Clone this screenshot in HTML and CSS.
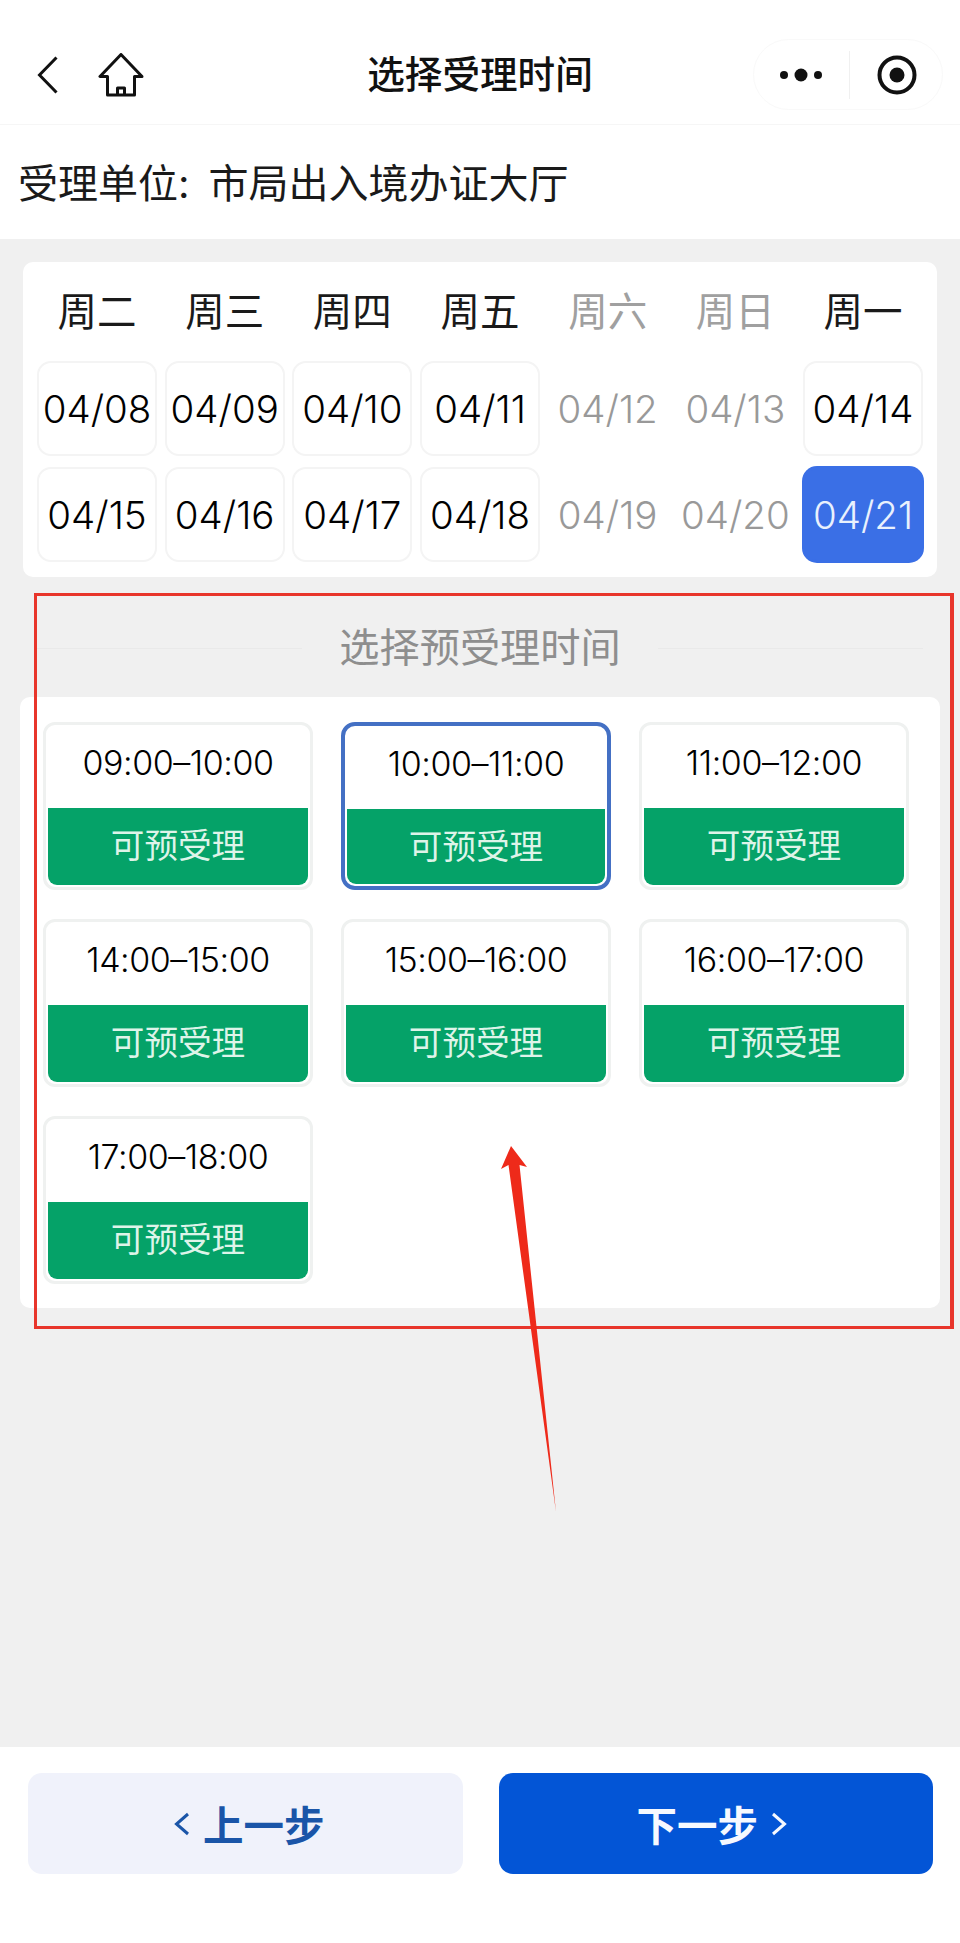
FILE: index.html
```html
<!DOCTYPE html>
<html lang="zh-CN">
<head>
<meta charset="utf-8">
<title>选择受理时间</title>
<link rel="stylesheet" href="styles.css">
</head>
<body>
<div class="page">
  <header class="nav">
    <div class="nav-left">
      <svg class="icon-back" viewBox="0 0 20 38"><path d="M19 1.500 2 19l17 17.500"/></svg>
      <svg class="icon-home" viewBox="0 0 46 44"><path d="M23 1.500 2 23.500h7.500V42h27V23.500H44Z"/><path d="M19.500 42v-7h7v7"/></svg>
    </div>
    <h1 class="nav-title">选择受理时间</h1>
    <div class="nav-right">
      <div class="capsule">
        <svg class="icon-dots" viewBox="0 0 42 16"><circle cx="4" cy="8" r="4"/><circle cx="21" cy="8" r="6.500"/><circle cx="38" cy="8" r="4"/></svg>
        <span class="capsule-line"></span>
        <svg class="icon-target" viewBox="0 0 40 40"><circle class="ring" cx="20" cy="20" r="17.500"/><circle cx="20" cy="20" r="7.500"/></svg>
      </div>
    </div>
  </header>
  <div class="unit">受理单位: <span class="unit-name">市局出入境办证大厅</span></div>
  <main class="main">
    <section class="calendar">
      <div class="week">周二</div><div class="week">周三</div><div class="week">周四</div><div class="week">周五</div><div class="week off">周六</div><div class="week off">周日</div><div class="week">周一</div>
      <div class="date">04/08</div><div class="date">04/09</div><div class="date">04/10</div><div class="date">04/11</div><div class="date off">04/12</div><div class="date off">04/13</div><div class="date">04/14</div>
      <div class="date">04/15</div><div class="date">04/16</div><div class="date">04/17</div><div class="date">04/18</div><div class="date off">04/19</div><div class="date off">04/20</div><div class="date active">04/21</div>
    </section>
    <div class="section-head">
      <span class="section-line"></span>
      <h2 class="section-title">选择预受理时间</h2>
      <span class="section-line"></span>
    </div>
    <section class="slots">
      <div class="slot"><div class="slot-time">09:00–10:00</div><div class="slot-state">可预受理</div></div>
      <div class="slot selected"><div class="slot-time">10:00–11:00</div><div class="slot-state">可预受理</div></div>
      <div class="slot"><div class="slot-time">11:00–12:00</div><div class="slot-state">可预受理</div></div>
      <div class="slot"><div class="slot-time">14:00–15:00</div><div class="slot-state">可预受理</div></div>
      <div class="slot"><div class="slot-time">15:00–16:00</div><div class="slot-state">可预受理</div></div>
      <div class="slot"><div class="slot-time">16:00–17:00</div><div class="slot-state">可预受理</div></div>
      <div class="slot"><div class="slot-time">17:00–18:00</div><div class="slot-state">可预受理</div></div>
    </section>
  </main>
  <footer class="footer">
    <div class="btn btn-prev">
      <svg class="btn-chev" viewBox="0 0 16 24"><path d="M14 2 2.500 12 14 22"/></svg>
      <span>上一步</span>
    </div>
    <div class="btn btn-next">
      <span>下一步</span>
      <svg class="btn-chev" viewBox="0 0 16 24"><path d="M2 2l11.500 10L2 22"/></svg>
    </div>
  </footer>
  <div class="mark-box"></div>
  <svg class="mark-arrow" viewBox="0 0 70 380"><path d="M21 6 37 27 29.500 25 66 372 18.500 25 11 29Z"/></svg>
</div>
</body>
</html>
```
FILE: styles.css
```css
* { box-sizing: border-box; }
html, body { margin: 0; padding: 0; }
body {
  background: #fff;
  color: #111;
  font-family: Inter, "Noto Sans CJK SC", sans-serif;
}
.page {
  position: relative;
  display: flex;
  flex-direction: column;
  width: 960px;
  height: 1943px;
  overflow: hidden;
}
.nav {
  display: grid;
  grid-template-columns: 1fr auto 1fr;
  align-items: center;
  height: 125px;
  padding: 39px 17px 14px;
  border-bottom: 1px solid #f6f6f6;
}
.nav-left {
  display: flex;
  align-items: center;
  gap: 40px;
  padding-left: 20px;
}
.icon-back { width: 21px; height: 38px; }
.icon-back path { fill: none; stroke: #111; stroke-width: 3; }
.icon-home { width: 46px; height: 44px; }
.icon-home path { fill: none; stroke: #111; stroke-width: 3; stroke-linejoin: round; }
.nav-title {
  margin: 0;
  font-size: 37.600px;
  line-height: 44px;
  font-weight: 500;
  color: #111;
}
.nav-right { display: flex; justify-content: flex-end; }
.capsule {
  display: flex;
  align-items: center;
  width: 190px;
  height: 71px;
  padding-left: 26px;
  border: 1px solid #f9f9f9;
  border-radius: 36px;
}
.icon-dots { width: 42px; height: 16px; fill: #111; }
.capsule-line {
  width: 1px;
  height: 48px;
  margin: 0 27px;
  background: #f0f0f0;
}
.icon-target { width: 40px; height: 40px; fill: #111; }
.icon-target .ring { fill: none; stroke: #111; stroke-width: 4; }
.unit {
  display: flex;
  align-items: center;
  height: 114px;
  padding: 4px 0 0 18px;
  font-size: 40px;
  line-height: 50px;
  color: #1a1a1a;
}
.unit-name { margin-left: 19px; }
.main {
  flex: 1;
  padding: 23px 20px 0;
  background: #f0f0f0;
}
.calendar {
  display: grid;
  grid-template-columns: repeat(7, 1fr);
  column-gap: 7.670px;
  row-gap: 11px;
  margin: 0 3px;
  padding: 25px 14px 15px;
  background: #fff;
  border-radius: 10px;
}
.week {
  height: 50px;
  margin-bottom: 13px;
  font-size: 39.500px;
  line-height: 50px;
  text-align: center;
  color: #1a1a1a;
}
.week.off { color: #a0a0a0; }
.date {
  display: flex;
  align-items: center;
  justify-content: center;
  height: 95px;
  font-size: 38.500px;
  font-weight: 300;
  color: #000;
  border: 2px solid #f4f4f4;
  border-radius: 14px;
  white-space: nowrap;
}
.date.off { color: #999; border-color: transparent; }
.date.active {
  color: #e9f1fd;
  background: #3a6fe6;
  border-color: #3a6fe6;
  box-shadow: 0 0 0 1px #3a6fe6;
}
.section-head {
  display: flex;
  align-items: center;
  gap: 37px;
  height: 120px;
  padding: 22px 17px 0;
}
.section-line { flex: 1; height: 1px; background: #e9e9e9; }
.section-title {
  margin: 0;
  font-size: 40.200px;
  line-height: 50px;
  font-weight: 400;
  color: #8e8e8e;
}
.slots {
  display: grid;
  grid-template-columns: repeat(3, 270px);
  column-gap: 28px;
  row-gap: 29px;
  height: 611px;
  align-content: start;
  padding: 25px 23px;
  background: #fff;
  border-radius: 10px;
}
.slot {
  display: flex;
  flex-direction: column;
  height: 168px;
  padding: 2px;
  background: #fff;
  border: 3px solid #eff1f0;
  border-radius: 12px;
}
.slot.selected { padding: 2px; border: 4px solid #4470c4; border-radius: 14px; }
.slot-time {
  height: 81px;
  padding-bottom: 10px;
  font-size: 34px;
  font-weight: 300;
  line-height: 71px;
  letter-spacing: -0.450px;
  text-align: center;
  color: #000;
  white-space: nowrap;
}
.slot-state {
  flex: 1;
  font-size: 33.600px;
  line-height: 75px;
  text-align: center;
  color: #def4e9;
  background: #05a268;
  border-radius: 0 0 9px 9px;
}
.footer {
  display: flex;
  align-items: flex-start;
  gap: 36px;
  height: 196px;
  padding: 26px 27px 0 28px;
  background: #fff;
}
.btn {
  display: flex;
  align-items: center;
  justify-content: center;
  gap: 13px;
  flex: 1;
  height: 101px;
  font-size: 40.500px;
  font-weight: 700;
  border-radius: 14px;
}
.btn-prev { color: #1a55a8; background: #f0f2fb; padding-left: 8px; }
.btn-next { color: #f6f9ff; background: #0355d6; padding-right: 8px; }
.btn-chev { width: 16px; height: 24px; fill: none; stroke: currentColor; stroke-width: 3; }
.mark-box {
  position: absolute;
  left: 34px;
  top: 593px;
  width: 920px;
  height: 736px;
  border: 3px solid #e8352b;
  border-right-width: 4px;
}
.mark-arrow {
  position: absolute;
  left: 490px;
  top: 1140px;
  width: 70px;
  height: 380px;
  fill: #ee2a1a;
}
```
